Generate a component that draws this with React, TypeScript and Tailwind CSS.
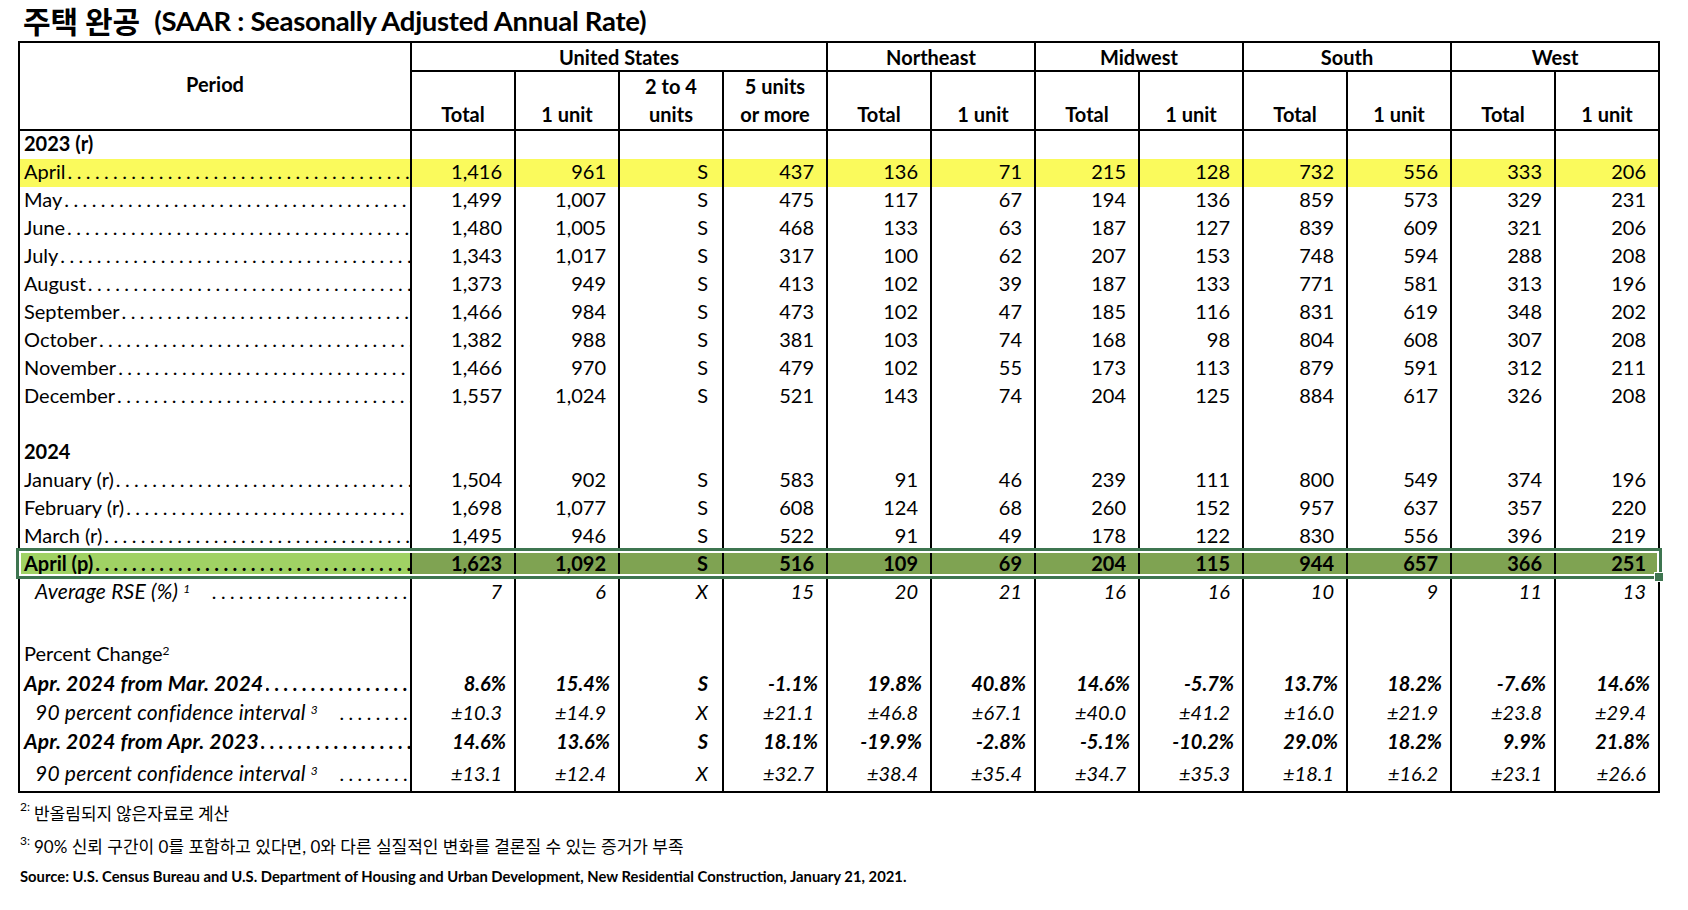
import React from "react";

type Row = {
  label: string;
  sup?: string;
  values?: string[];
  kind?: "year" | "plain" | "yellow" | "green" | "rse" | "pct" | "ci" | "blank" | "heading";
  h?: string;
};

const rows: Row[] = [
  { label: "2023 (r)", kind: "year" },
  { label: "April", kind: "yellow", values: ["1,416", "961", "S", "437", "136", "71", "215", "128", "732", "556", "333", "206"] },
  { label: "May", values: ["1,499", "1,007", "S", "475", "117", "67", "194", "136", "859", "573", "329", "231"] },
  { label: "June", values: ["1,480", "1,005", "S", "468", "133", "63", "187", "127", "839", "609", "321", "206"] },
  { label: "July", values: ["1,343", "1,017", "S", "317", "100", "62", "207", "153", "748", "594", "288", "208"] },
  { label: "August", values: ["1,373", "949", "S", "413", "102", "39", "187", "133", "771", "581", "313", "196"] },
  { label: "September", values: ["1,466", "984", "S", "473", "102", "47", "185", "116", "831", "619", "348", "202"] },
  { label: "October", values: ["1,382", "988", "S", "381", "103", "74", "168", "98", "804", "608", "307", "208"] },
  { label: "November", values: ["1,466", "970", "S", "479", "102", "55", "173", "113", "879", "591", "312", "211"] },
  { label: "December", values: ["1,557", "1,024", "S", "521", "143", "74", "204", "125", "884", "617", "326", "208"] },
  { label: "", kind: "blank" },
  { label: "2024", kind: "year" },
  { label: "January (r)", values: ["1,504", "902", "S", "583", "91", "46", "239", "111", "800", "549", "374", "196"] },
  { label: "February (r)", values: ["1,698", "1,077", "S", "608", "124", "68", "260", "152", "957", "637", "357", "220"] },
  { label: "March (r)", values: ["1,495", "946", "S", "522", "91", "49", "178", "122", "830", "556", "396", "219"] },
  { label: "April (p)", kind: "green", values: ["1,623", "1,092", "S", "516", "109", "69", "204", "115", "944", "657", "366", "251"] },
  { label: "Average RSE (%)", sup: "1", kind: "rse", values: ["7", "6", "X", "15", "20", "21", "16", "16", "10", "9", "11", "13"] },
  { label: "", kind: "blank", h: "h-[33px]" },
  { label: "Percent Change", sup: "2", kind: "heading", h: "h-[30px]" },
  { label: "Apr. 2024 from Mar. 2024", kind: "pct", h: "h-[30px]", values: ["8.6%", "15.4%", "S", "-1.1%", "19.8%", "40.8%", "14.6%", "-5.7%", "13.7%", "18.2%", "-7.6%", "14.6%"] },
  { label: "90 percent confidence interval", sup: "3", kind: "ci", values: ["±10.3", "±14.9", "X", "±21.1", "±46.8", "±67.1", "±40.0", "±41.2", "±16.0", "±21.9", "±23.8", "±29.4"] },
  { label: "Apr. 2024 from Apr. 2023", kind: "pct", h: "h-[30px]", values: ["14.6%", "13.6%", "S", "18.1%", "-19.9%", "-2.8%", "-5.1%", "-10.2%", "29.0%", "18.2%", "9.9%", "21.8%"] },
  { label: "90 percent confidence interval", sup: "3", kind: "ci", h: "h-[34px]", values: ["±13.1", "±12.4", "X", "±32.7", "±38.4", "±35.4", "±34.7", "±35.3", "±18.1", "±16.2", "±23.1", "±26.6"] },
];

const DOTS = ".".repeat(80);

function PeriodCell({ row }: { row: Row }) {
  const k = row.kind;
  if (k === "blank") return <div />;
  if (k === "year") return <div className="font-bold">{row.label}</div>;
  if (k === "heading")
    return (
      <div>
        {row.label}
        <sup className="text-[12px]">{row.sup}</sup>
      </div>
    );
  const indent = k === "rse" || k === "ci";
  const italic = indent || k === "pct";
  return (
    <div className={`flex items-baseline ${indent ? "pl-[11px] italic" : ""}`}>
      <span className={`shrink-0 whitespace-nowrap ${italic ? "text-[21px] tracking-[0.2px]" : ""}`}>
        {row.label}
        {row.sup && <sup className="ml-[5px] text-[12px]">{row.sup}</sup>}
      </span>
      <span className={`min-w-0 flex-1 overflow-hidden whitespace-nowrap tracking-[4.4px] ${indent ? "ml-[22px]" : "ml-[2px]"}`}>
        {DOTS}
      </span>
    </div>
  );
}

export default function App() {
  const groups = [
    { name: "United States", span: 4 },
    { name: "Northeast", span: 2 },
    { name: "Midwest", span: 2 },
    { name: "South", span: 2 },
    { name: "West", span: 2 },
  ];
  const subs = ["Total", "1 unit", "2 to 4\nunits", "5 units\nor more", "Total", "1 unit", "Total", "1 unit", "Total", "1 unit", "Total", "1 unit"];

  return (
    <div className="min-h-[910px] w-[1688px] bg-white font-[Lato,'Noto_Sans_CJK_KR',sans-serif] text-black">
      <div className="flex h-[41px] items-center pl-[23px] font-bold">
        <span className="font-['Noto_Sans_CJK_KR',sans-serif] text-[30px]">주택 완공</span>
        <span className="ml-[14px] text-[27.5px] tracking-[-0.3px]">(SAAR : Seasonally Adjusted Annual Rate)</span>
      </div>

      <div className="relative ml-[18px] w-[1642px]">
        <table className="w-[1642px] table-fixed border-collapse border-2 border-black text-[20px] leading-[28px]">
          <colgroup>
            <col className="w-[392px]" />
            {subs.map((_, i) => (
              <col key={i} className="w-[104px]" />
            ))}
          </colgroup>
          <thead>
            <tr className="h-[29px]">
              <th rowSpan={2} className="border-2 border-black pb-[4px] text-center align-middle font-bold">
                Period
              </th>
              {groups.map((g) => (
                <th key={g.name} colSpan={g.span} className="border-2 border-black p-0 text-center font-bold leading-[26px]">
                  {g.name}
                </th>
              ))}
            </tr>
            <tr className="h-[58px]">
              {subs.map((s, i) => (
                <th key={i} className="whitespace-pre-line border-2 border-black p-0 pb-[1px] text-center align-bottom font-bold leading-[28px]">
                  {s}
                </th>
              ))}
            </tr>
          </thead>
          <tbody className="leading-[24px]">
            {rows.map((r, ri) => {
              const bg = r.kind === "yellow" ? "bg-[#FAFA5C]" : "";
              const bold = r.kind === "green" || r.kind === "year";
              const italic = r.kind === "rse" || r.kind === "ci" || r.kind === "pct";
              const pct = r.kind === "pct";
              return (
                <tr key={ri} className={`${r.h ?? "h-[28px]"} ${bg}`}>
                  <td
                    className={`border-x-2 border-black p-0 pb-[4px] pl-[4px] align-middle ${bold || pct ? "font-bold" : ""} ${pct ? "italic" : ""} ${
                      r.kind === "green" ? "bg-[#A0D264]" : ""
                    } ${r.kind === "heading" ? "align-bottom" : ""}`}
                  >
                    <PeriodCell row={r} />
                  </td>
                  {Array.from({ length: 12 }).map((_, ci) => {
                    const v = r.values?.[ci] ?? "";
                    const sx = v === "S" || v === "X";
                    return (
                      <td
                        key={ci}
                        className={`border-x-2 border-black p-0 pb-[4px] text-right align-middle ${sx ? "pr-[14px]" : pct ? "pr-[8px]" : "pr-[12px]"} ${
                          r.kind === "green" ? "bg-[#7FA352] font-bold" : ""
                        } ${italic ? "italic" : ""} ${pct ? "font-bold" : ""}`}
                      >
                        {v}
                      </td>
                    );
                  })}
                </tr>
              );
            })}
          </tbody>
        </table>

        {/* excel selection frame over the April (p) row */}
        <div className="pointer-events-none absolute left-[-2px] top-[507px] h-[31px] w-[1646px] border-[3px] border-[#3E7550]">
          <div className="h-full w-full border-2 border-white" />
          <div className="absolute bottom-[-6px] right-[-5px] h-[10px] w-[10px] border border-white bg-[#3E7550]" />
        </div>
      </div>

      <div className="pl-[20px] pt-[7px]">
        <div className="flex h-[26px] items-center">
          <sup className="mr-[4px] text-[12px]">2:</sup>
          <span className="font-['Noto_Sans_CJK_KR',sans-serif] text-[17px]">반올림되지 않은자료로 계산</span>
        </div>
        <div className="mt-[8px] flex h-[26px] items-center">
          <sup className="mr-[4px] text-[12px]">3:</sup>
          <span className="text-[17px]">90% 신뢰 구간이 0를 포함하고 있다면, 0와 다른 실질적인 변화를 결론질 수 있는 증거가 부족</span>
        </div>
        <div className="mt-[5px] text-[14.8px] font-bold">
          Source: U.S. Census Bureau and U.S. Department of Housing and Urban Development, New Residential Construction, January 21, 2021.
        </div>
      </div>
    </div>
  );
}
